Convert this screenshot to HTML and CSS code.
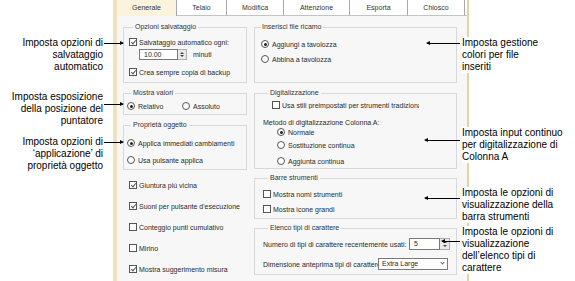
FILE: index.html
```html
<!DOCTYPE html>
<html lang="it">
<head>
    <meta charset="UTF-8">
    <meta name="viewport" content="width=device-width, initial-scale=1.0">
    <title>Opzioni generali</title>
    <link rel="stylesheet" href="styles.css">
</head>
<body>
<div class="page">
    <div class="notes notes-left">
        <div class="note n1">Imposta opzioni di<br>salvataggio<br>automatico<i class="lead"></i></div>
        <div class="note n2">Imposta esposizione<br>della posizione del<br>puntatore<i class="lead"></i></div>
        <div class="note n3">Imposta opzioni di<br>‘applicazione’ di<br>proprietà oggetto<i class="lead"></i></div>
    </div>

    <div class="dialog">
        <div class="tabs">
            <div class="tab active t1">Generale</div>
            <div class="tab t2">Telaio</div>
            <div class="tab t3">Modifica</div>
            <div class="tab t4">Attenzione</div>
            <div class="tab t5">Esporta</div>
            <div class="tab t6">Chiosco</div>
            <div class="tab-fill"></div>
        </div>
        <div class="panel">
            <div class="col col-left">
                <fieldset class="group g-save">
                    <legend>Opzioni salvataggio</legend>
                    <div class="row"><span class="cb on"></span>Salvataggio automatico ogni:</div>
                    <div class="row spin-row">
                        <span class="spin"><span class="spin-val">10.00</span><span class="spin-btn"><i class="up"></i><i class="down"></i></span></span>
                        minuti
                    </div>
                    <div class="row r3"><span class="cb on"></span>Crea sempre copia di backup</div>
                </fieldset>

                <fieldset class="group g-show">
                    <legend>Mostra valori</legend>
                    <div class="row">
                        <span class="opt"><span class="rb on"></span>Relativo</span>
                        <span class="opt"><span class="rb"></span>Assoluto</span>
                    </div>
                </fieldset>

                <fieldset class="group g-prop">
                    <legend>Proprietà oggetto</legend>
                    <div class="row"><span class="rb on"></span>Applica immediati cambiamenti</div>
                    <div class="row r2"><span class="rb"></span>Usa pulsante applica</div>
                </fieldset>

                <div class="checks">
                    <div class="row"><span class="cb on"></span>Giuntura più vicina</div>
                    <div class="row"><span class="cb on"></span>Suoni per pulsante d'esecuzione</div>
                    <div class="row"><span class="cb"></span>Conteggio punti cumulativo</div>
                    <div class="row"><span class="cb"></span>Mirino</div>
                    <div class="row"><span class="cb on"></span>Mostra suggerimento misura</div>
                </div>
            </div>

            <div class="col col-right">
                <fieldset class="group g-insert">
                    <legend>Inserisci file ricamo</legend>
                    <div class="row"><span class="rb on"></span>Aggiungi a tavolozza</div>
                    <div class="row r2"><span class="rb"></span>Abbina a tavolozza</div>
                </fieldset>

                <fieldset class="group g-digit">
                    <legend>Digitalizzazione</legend>
                    <div class="row sm indent"><span class="cb"></span><span class="clip">Usa stili preimpostati per strumenti tradizionali</span></div>
                    <div class="row sm method">Metodo di digitalizzazione Colonna A:</div>
                    <div class="row sm radio-in"><span class="rb on"></span>Normale</div>
                    <div class="row sm radio-in m3"><span class="rb"></span>Sostituzione continua</div>
                    <div class="row sm radio-in m6"><span class="rb"></span>Aggiunta continua</div>
                </fieldset>

                <fieldset class="group g-bars">
                    <legend>Barre strumenti</legend>
                    <div class="row sm"><span class="cb"></span>Mostra nomi strumenti</div>
                    <div class="row sm r2"><span class="cb"></span>Mostra icone grandi</div>
                </fieldset>

                <fieldset class="group g-fonts">
                    <legend>Elenco tipi di carattere</legend>
                    <div class="row">
                        <span class="lbl lbl-num">Numero di tipi di carattere recentemente usati:</span>
                        <span class="spin spin-num"><span class="spin-val">5</span><span class="spin-btn"><i class="up"></i><i class="down"></i></span></span>
                    </div>
                    <div class="row r2">
                        <span class="lbl lbl-size">Dimensione anteprima tipi di carattere:</span>
                        <span class="select">Extra Large<i class="chev"></i></span>
                    </div>
                </fieldset>
            </div>
        </div>
    </div>

    <div class="notes notes-right">
        <div class="note n1">Imposta gestione<br>colori per file<br>inseriti<i class="lead"></i></div>
        <div class="note n2">Imposta input continuo<br>per digitalizzazione di<br>Colonna A<i class="lead"></i></div>
        <div class="note n3">Imposta le opzioni di<br>visualizzazione della<br>barra strumenti<i class="lead"></i></div>
        <div class="note n4">Imposta le opzioni di<br>visualizzazione<br>dell’elenco tipi di<br>carattere<i class="lead"></i></div>
    </div>
</div>
</body>
</html>
```

FILE: styles.css
```css
*{
    margin: 0;
    padding: 0;
    box-sizing: border-box;
}
body{
    width: 575px;
    height: 281px;
    overflow: hidden;
    background: #fff;
    font-family: "Liberation Sans", Arial, sans-serif;
}
.page{
    display: flex;
    height: 281px;
}

/* callouts */
.notes{
    flex: none;
    width: 113px;
    font-size: 10px;
    line-height: 12px;
    color: #000;
}
.note{
    position: relative;
}
.lead{
    position: absolute;
    height: 1px;
    background: #000;
}
.lead::after{
    content: '';
    position: absolute;
    top: -2px;
    border-top: 2.5px solid transparent;
    border-bottom: 2.5px solid transparent;
}
.notes-left{
    text-align: right;
    padding-right: 10px;
}
.notes-left .lead{
    left: 100%;
    margin-left: 1px;
    width: 19px;
}
.notes-left .lead::after{
    right: -1px;
    border-left: 4px solid #000;
}
.notes-left .n1{ margin-top: 37px; }
.notes-left .n1 .lead{ top: 6px; }
.notes-left .n2{ margin-top: 18px; }
.notes-left .n2 .lead{ top: 13px; }
.notes-left .n3{ margin-top: 9px; }
.notes-left .n3 .lead{ top: 6px; }

.notes-right{
    margin-left: -7px;
}
.notes-right .note{
    background: #fff;
}
.notes-right .lead{
    right: 100%;
    margin-right: 2px;
    width: 35px;
}
.notes-right .lead::after{
    left: -1px;
    border-right: 4px solid #000;
}
.notes-right .n1{ margin-top: 37px; }
.notes-right .n1 .lead{ top: 6px; width: 33px; }
.notes-right .n2{ margin-top: 54px; }
.notes-right .n2 .lead{ top: 13px; }
.notes-right .n3{ margin-top: 24px; }
.notes-right .n3 .lead{ top: 11px; }
.notes-right .n4{ margin-top: 3px; }
.notes-right .n4 .lead{ top: 15px; width: 18px; }

/* dialog */
.dialog{
    flex: none;
    width: 356px;
    border-left: 4px solid #efe3bd;
    border-right: 2px solid #e5d39f;
    background: #f7f7f7;
    display: flex;
    flex-direction: column;
    font-size: 7px;
    color: #2a2a2a;
}
.tabs{
    display: flex;
    height: 16px;
    background: #fff;
}
.tab{
    height: 16px;
    line-height: 15px;
    text-align: center;
    border-right: 1px solid #a8a8a8;
    border-bottom: 1px solid #c4c4c4;
    color: #333;
}
.tab.active{
    background: #fcf3dc;
    border-bottom: none;
}
.t1{ width: 60px; }
.t2{ width: 50px; }
.t3{ width: 57px; }
.t4{ width: 66px; }
.t5{ width: 58px; }
.t6{ width: 57px; }
.tab-fill{
    flex: 1;
    border-bottom: 1px solid #c4c4c4;
}
.panel{
    display: flex;
    gap: 7px;
    padding: 6px 0 0 6px;
}
.col{
    flex: none;
    display: flex;
    flex-direction: column;
}
.col-left{ width: 124px; }
.col-right{ width: 203px; }

.group{
    border: 1px solid #d8d8d8;
    min-width: 0;
}
.group legend{
    line-height: 10px;
    padding: 0 2px;
    margin-left: 4px;
    color: #333;
}
.row{
    display: flex;
    align-items: center;
    height: 12px;
    white-space: nowrap;
}
.row.sm{ height: 10px; }

.g-save{ padding: 4px 5px 4px; }
.g-save .spin-row{ margin-top: 1px; height: 11px; padding-left: 10px; }
.g-save .r3{ margin-top: 6px; }
.g-show{ margin-top: 5px; padding: 2px 3px 2px; }
.g-show .opt{ display: flex; align-items: center; width: 55px; }
.g-prop{ margin-top: 5px; padding: 7px 3px 3px; }
.g-prop .r2{ margin-top: 5px; }
.checks{ padding-left: 6px; }
.checks .row{ margin-top: 9px; }

.g-insert{ padding: 6px 6px 17px; }
.g-insert legend{ margin-left: 0; padding: 0 1px; }
.g-insert .r2{ margin-top: 3px; }
.g-digit{ margin-top: 5px; padding: 2px 8px 2px; }
.g-digit legend, .g-bars legend, .g-fonts legend{ margin-left: 5px; }
.g-digit .indent{ padding-left: 9px; }
.g-digit .clip{ overflow: hidden; width: 137px; }
.g-digit .method{ margin-top: 7px; }
.g-digit .radio-in{ padding-left: 14px; }
.g-digit .m3{ margin-top: 3px; }
.g-digit .m6{ margin-top: 6px; }
.g-bars{ margin-top: 4px; padding: 6px 8px 4px; }
.g-bars .r2{ margin-top: 5px; }
.g-fonts{ margin-top: 4px; padding: 5px 8px 4px; }
.g-fonts .r2{ margin-top: 8px; }
.lbl{ flex: none; overflow: visible; }
.lbl-num{ width: 146px; }
.lbl-size{ width: 115px; }

/* controls */
.cb, .rb{
    flex: none;
    position: relative;
    width: 8px;
    height: 8px;
    border: 1px solid #555;
    background: #fff;
    margin-right: 2px;
}
.rb{
    border-radius: 50%;
    margin-right: 3px;
}
.cb.on::after{
    content: '';
    position: absolute;
    left: 2px;
    top: 0;
    width: 2px;
    height: 4px;
    border-right: 1px solid #555;
    border-bottom: 1px solid #555;
    transform: rotate(40deg);
}
.rb.on::after{
    content: '';
    position: absolute;
    left: 1.5px;
    top: 1.5px;
    width: 3px;
    height: 3px;
    border-radius: 50%;
    background: #222;
}
.spin{
    display: flex;
    height: 11px;
    margin-right: 6px;
}
.spin-val{
    width: 39px;
    border: 1px solid #7a7a7a;
    background: #fff;
    padding-left: 4px;
    line-height: 9px;
}
.spin-btn{
    width: 9px;
    border: 1px solid #adadad;
    border-left: none;
    background: #e9e9e9;
    display: flex;
    flex-direction: column;
    align-items: center;
    justify-content: space-evenly;
}
.spin-btn i{
    width: 0;
    height: 0;
    border-left: 2px solid transparent;
    border-right: 2px solid transparent;
}
.spin-btn .up{ border-bottom: 2px solid #444; }
.spin-btn .down{ border-top: 2px solid #444; }
.spin-num{
    height: 12px;
    margin-right: 0;
}
.spin-num .spin-val{
    width: 31px;
    line-height: 10px;
}
.spin-num .spin-btn{ width: 10px; }
.select{
    position: relative;
    width: 75px;
    height: 12px;
    line-height: 10px;
    border: 1px solid #7a7a7a;
    background: #fff;
    padding-left: 3px;
}
.chev{
    position: absolute;
    right: 3px;
    top: 2px;
    width: 3px;
    height: 3px;
    border-right: 1px solid #666;
    border-bottom: 1px solid #666;
    transform: rotate(45deg);
}
```
